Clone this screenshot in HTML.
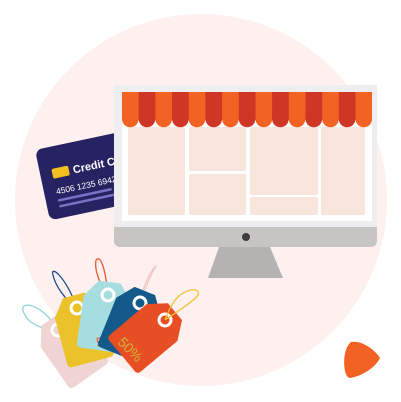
<!DOCTYPE html>
<html><head><style>html,body{margin:0;padding:0;background:#fff;width:401px;height:402px;overflow:hidden}</style></head>
<body>
<svg width="401" height="402" viewBox="0 0 401 402" xmlns="http://www.w3.org/2000/svg" font-family="Liberation Sans, sans-serif">
<circle cx="201" cy="200" r="186" fill="#fdf0ef"/>
<!-- card -->
<g transform="translate(35,150) rotate(-12)">
<rect x="0" y="0" width="120" height="72" rx="7" fill="#272363"/>
<rect x="12" y="22" width="17" height="10" rx="2" fill="#f4c020"/>
<text x="33" y="31" fill="#fff" font-weight="bold" font-size="11">Credit Card</text>
<text x="12" y="48" fill="#fff" font-size="8.5">4506 1235 6942</text>
<rect x="12" y="53" width="55" height="2.5" rx="1.2" fill="#7b72c6"/>
<rect x="12" y="59" width="80" height="2.5" rx="1.2" fill="#7b72c6"/>
</g>
<!-- monitor -->
<rect x="114" y="85" width="263" height="162" rx="6" fill="#eeeef0"/>
<path d="M114 227 H377 V241 a6 6 0 0 1 -6 6 H120 a6 6 0 0 1 -6 -6Z" fill="#c6c5c3"/>
<circle cx="246" cy="237" r="4" fill="#3e3e3e"/>
<path d="M219 247 H270 L283 278 H208Z" fill="#b4b3b2"/>
<rect x="122" y="92" width="250" height="129" fill="#fff"/>
<g fill="#f8e5dc">
<rect x="128" y="127" width="57" height="88" rx="2"/>
<rect x="189" y="127" width="57" height="44" rx="2"/>
<rect x="189" y="174" width="57" height="41" rx="2"/>
<rect x="250" y="127" width="68" height="68" rx="2"/>
<rect x="250" y="197" width="68" height="18" rx="2"/>
<rect x="321" y="127" width="44" height="88" rx="2"/>
</g>
<g>
<rect x="122" y="92" width="250" height="28" fill="#f26223"/>
<g fill="#cf3626">
<rect x="138.7" y="92" width="16.7" height="28"/><rect x="172" y="92" width="16.7" height="28"/><rect x="205.4" y="92" width="16.7" height="28"/><rect x="238.8" y="92" width="16.7" height="28"/><rect x="272.1" y="92" width="16.7" height="28"/><rect x="305.5" y="92" width="16.7" height="28"/><rect x="338.8" y="92" width="16.7" height="28"/>
</g>
<g fill="#f26223">
<circle cx="130.3" cy="119" r="8.3"/><circle cx="163.7" cy="119" r="8.3"/><circle cx="197" cy="119" r="8.3"/><circle cx="230.4" cy="119" r="8.3"/><circle cx="263.8" cy="119" r="8.3"/><circle cx="297.1" cy="119" r="8.3"/><circle cx="330.5" cy="119" r="8.3"/><circle cx="363.8" cy="119" r="8.3"/>
</g>
<g fill="#cf3626">
<circle cx="147" cy="119" r="8.3"/><circle cx="180.4" cy="119" r="8.3"/><circle cx="213.7" cy="119" r="8.3"/><circle cx="247.1" cy="119" r="8.3"/><circle cx="280.4" cy="119" r="8.3"/><circle cx="313.8" cy="119" r="8.3"/><circle cx="347.1" cy="119" r="8.3"/>
</g>
<rect x="114" y="85" width="8" height="42" fill="#eeeef0"/>
<rect x="372" y="85" width="5" height="42" fill="#eeeef0"/>
</g>
<!-- tags -->
<defs><path id="tag" d="M-11,-13 H11 L24,4 V52 a4 4 0 0 1 -4 4 H-20 a4 4 0 0 1 -4 -4 V4Z"/></defs>
<g fill="none" stroke-width="1.3">
<path d="M58,330 C40,300 15,300 25,315 C30,325 45,330 58,330" stroke="#8fd3de"/>
<path d="M77,308 C65,275 50,265 53,275 C55,285 65,300 77,308" stroke="#1e4d8a"/>
<path d="M108,295 C105,265 100,255 96,260 C94,270 100,285 108,295" stroke="#e85a30"/>
<path d="M140,303 C145,275 160,260 155,268 C150,275 145,290 140,303" stroke="#f0c8c8"/>
</g>
<use href="#tag" fill="#f0d3d3" transform="translate(58,330) rotate(-35)"/>
<circle cx="58" cy="330" r="6" fill="none" stroke="#fff" stroke-width="3"/>
<use href="#tag" fill="#ebc22a" transform="translate(77,308) rotate(-15)"/>
<circle cx="77" cy="308" r="6" fill="none" stroke="#fff" stroke-width="3"/>
<use href="#tag" fill="#a6dde0" transform="translate(108,295) rotate(8)"/>
<circle cx="108" cy="295" r="6" fill="none" stroke="#fff" stroke-width="3"/>
<text x="97" y="347" fill="#e85a30" font-size="13" transform="rotate(-10 97 347)">50</text>
<use href="#tag" fill="#135a8b" transform="translate(140,303) rotate(22)"/>
<circle cx="140" cy="303" r="6" fill="none" stroke="#fff" stroke-width="3"/>
<use href="#tag" fill="#e84e23" transform="translate(165,320) rotate(50)"/>
<circle cx="165" cy="320" r="6" fill="none" stroke="#fff" stroke-width="3"/>
<path d="M165,320 C180,310 195,300 198,295 C200,288 190,288 180,295 C172,302 168,312 165,320" fill="none" stroke="#f4c233" stroke-width="1.3"/>
<text x="117" y="343" fill="#cfb53c" font-size="14" transform="rotate(45 117 343)">50%</text>
<!-- blob -->
<path d="M351,342 C362,340 375,350 380,358 C375,368 362,376 350,378 C343,378 341,350 351,342Z" fill="#f26223"/>
</svg>
</body></html>
